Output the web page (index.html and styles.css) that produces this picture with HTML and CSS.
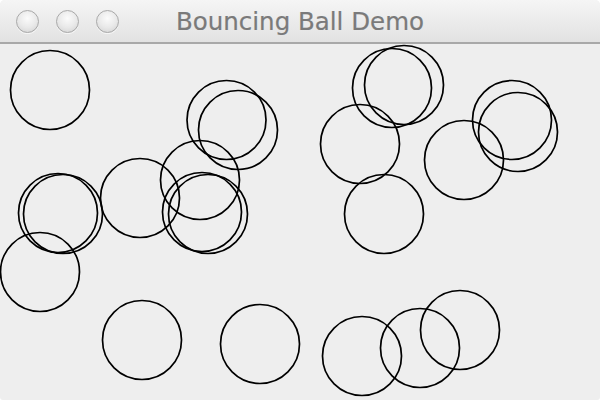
FILE: index.html
```html
<!DOCTYPE html>
<html>
<head>
<meta charset="utf-8">
<title>Bouncing Ball Demo</title>
<link rel="stylesheet" href="styles.css">
</head>
<body>
<div class="window">
  <div class="titlebar">
    <div class="lights">
      <span class="light"></span>
      <span class="light"></span>
      <span class="light"></span>
    </div>
    <div class="title">Bouncing Ball Demo</div>
  </div>
  <svg class="canvas" width="600" height="357" viewBox="0 43 600 357" xmlns="http://www.w3.org/2000/svg">
    <g fill="none" stroke="#000" stroke-width="1.7">
      <circle cx="50" cy="90" r="39.5"/>
      <circle cx="226.5" cy="120" r="39.5"/>
      <circle cx="238" cy="130" r="39.5"/>
      <circle cx="392" cy="88" r="39.5"/>
      <circle cx="404" cy="85" r="39.5"/>
      <circle cx="360" cy="144" r="39.5"/>
      <circle cx="512" cy="120" r="39.5"/>
      <circle cx="518" cy="132" r="39.5"/>
      <circle cx="464" cy="160" r="39.5"/>
      <circle cx="384" cy="214" r="39.5"/>
      <circle cx="58" cy="213" r="39.5"/>
      <circle cx="63" cy="214" r="39.5"/>
      <circle cx="140" cy="198" r="39.5"/>
      <circle cx="200" cy="180" r="39.5"/>
      <circle cx="202" cy="212" r="39.5"/>
      <circle cx="208" cy="214" r="39.5"/>
      <circle cx="40" cy="272" r="39.5"/>
      <circle cx="142" cy="340" r="39.5"/>
      <circle cx="260" cy="344" r="39.5"/>
      <circle cx="362" cy="356" r="39.5"/>
      <circle cx="420" cy="348" r="39.5"/>
      <circle cx="460" cy="330" r="39.5"/>
    </g>
  </svg>
</div>
</body>
</html>
```

FILE: styles.css
```css
html, body {
  margin: 0;
  padding: 0;
  background: #ffffff;
}
.window {
  width: 600px;
  height: 400px;
  background: #eeeeee;
  border-radius: 5px 5px 3px 3px;
  overflow: hidden;
  display: flex;
  flex-direction: column;
}
.titlebar {
  position: relative;
  height: 42px;
  flex: none;
  background: linear-gradient(#f5f5f5, #e2e2e2);
  border-bottom: 2px solid #a8a8a8;
  box-sizing: content-box;
  display: flex;
  align-items: center;
  justify-content: center;
}
.lights {
  position: absolute;
  left: 16px;
  top: 10px;
  display: flex;
  gap: 17px;
}
.light {
  width: 21px;
  height: 21px;
  border-radius: 50%;
  border: 1px solid #a9a9a9;
  background: radial-gradient(circle at 50% 35%, #fbfbfb 0%, #e8e8e8 55%, #cfcfcf 100%);
  box-shadow: 0 1px 0 rgba(255,255,255,0.6);
}
.title {
  font-family: "DejaVu Sans", sans-serif;
  font-size: 24.5px;
  color: #7a7a7a;
  margin-top: 0;
  -webkit-text-stroke: 0.2px #7a7a7a;
}
.canvas {
  display: block;
  flex: none;
  margin-top: -1px;
}
```
